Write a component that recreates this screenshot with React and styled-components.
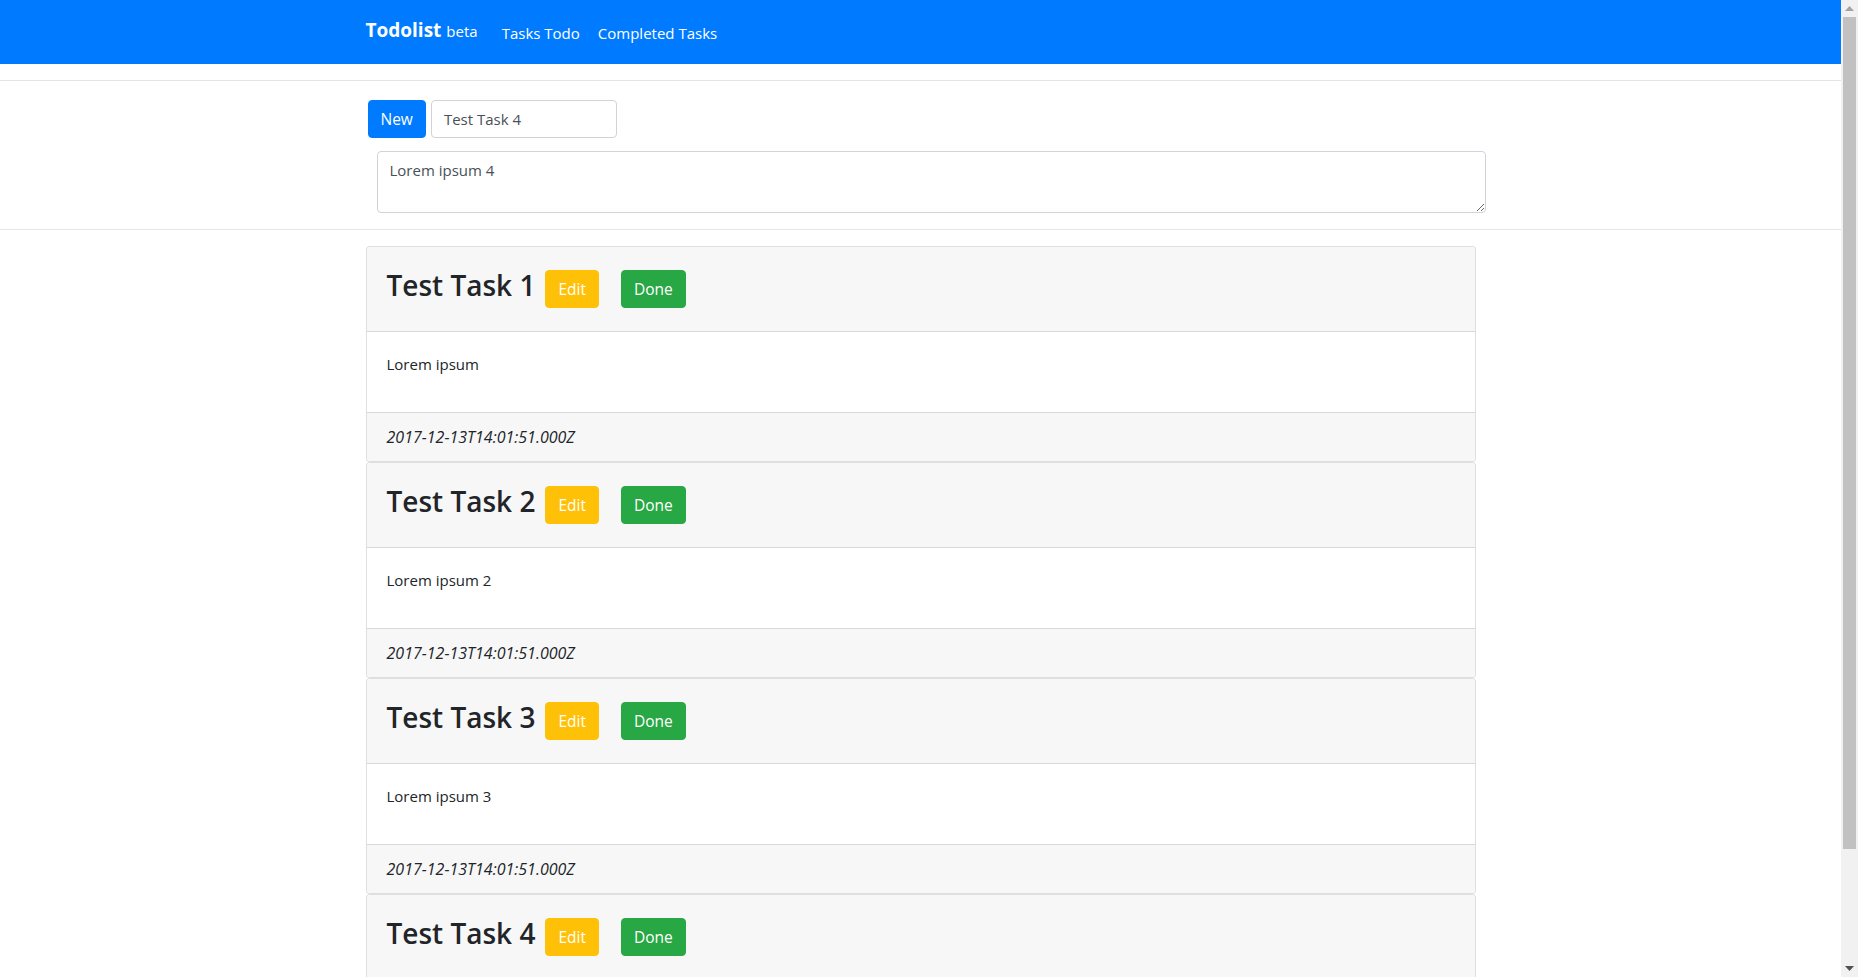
import React from "react";
import styled, { createGlobalStyle } from "styled-components";

const Global = createGlobalStyle`
  body {
    margin: 0;
    font-family: "Open Sans", "Noto Sans", "Liberation Sans", sans-serif;
    font-size: 16px;
    line-height: 1.5;
    color: #212529;
    background: #fff;
  }
  * { box-sizing: border-box; }
`;

const Frame = styled.div`
  display: flex;
  height: 100vh;
  overflow: hidden;
`;

const Page = styled.div`
  flex: 1;
  min-width: 0;
  overflow: hidden;
`;

const ScrollTrack = styled.div`
  width: 17px;
  flex: none;
  background: #f1f1f1;
  display: flex;
  flex-direction: column;
`;

const ScrollArrow = styled.div`
  height: 17px;
  flex: none;
  display: flex;
  align-items: center;
  justify-content: center;
`;

const ScrollThumb = styled.div`
  height: 832px;
  margin: 0 2px;
  background: #c1c1c1;
`;

const ScrollSpacer = styled.div`
  flex: 1;
`;

const Navbar = styled.nav`
  height: 64px;
  background: #007bff;
  display: flex;
  align-items: center;
`;

const Container = styled.div`
  width: 100%;
  max-width: 1140px;
  margin: 0 auto;
  padding: 0 15px;
`;

const NavInner = styled(Container)`
  display: flex;
  align-items: center;
`;

const Brand = styled.a`
  color: #fff;
  font-size: 19px;
  font-weight: 700;
  margin-right: 15px;
  margin-bottom: 3px;
  text-decoration: none;
  white-space: nowrap;
`;

const BrandSmall = styled.small`
  font-size: 15px;
  font-weight: 400;
  margin-left: 5px;
`;

const NavLink = styled.a`
  color: #fff;
  font-size: 15px;
  padding: 8px 9px 6px;
  text-decoration: none;
`;

const Divider = styled.hr`
  margin: ${(p) => p.$top}px 0 0 0;
  border: 0;
  border-top: 1px solid rgba(0, 0, 0, 0.1);
  height: 0;
`;

const FormSection = styled(Container)`
  padding-top: 19px;
`;

const FormRow = styled.div`
  display: flex;
  align-items: center;
  gap: 5px;
  padding-left: 2px;
`;

const Button = styled.button`
  font-family: inherit;
  font-size: 15.5px;
  line-height: 24px;
  height: 38px;
  padding: 6px 12px;
  border: 1px solid ${(p) => p.$bg};
  border-radius: 4px;
  background: ${(p) => p.$bg};
  color: #fff;
  cursor: pointer;
  margin-right: ${(p) => p.$mr || 0}px;
`;

const TextInput = styled.input`
  font-family: inherit;
  font-size: 15px;
  width: 186px;
  height: 38px;
  padding: 6px 12px;
  border: 1px solid #ced4da;
  border-radius: 4px;
  color: #495057;
  outline: none;
`;

const TextArea = styled.textarea`
  display: block;
  font-family: inherit;
  font-size: 15px;
  line-height: 24px;
  width: 1109px;
  height: 62px;
  margin: 13px 0 0 11px;
  padding: 6px 12px;
  border: 1px solid #ced4da;
  border-radius: 4px;
  color: #495057;
  outline: none;
`;

const List = styled(Container)`
  padding-top: 16px;
`;

const Card = styled.div`
  border: 1px solid rgba(0, 0, 0, 0.125);
  border-radius: 4px;
  background: #fff;
  overflow: hidden;
`;

const CardHeader = styled.div`
  display: flex;
  align-items: center;
  height: 85px;
  padding: 12px 20px;
  background: #f7f7f7;
  border-bottom: 1px solid rgba(0, 0, 0, 0.125);
`;

const Title = styled.h2`
  margin: 0 10px 0 0;
  font-size: 28px;
  font-weight: 600;
  line-height: 1.2;
  padding-bottom: 6px;
`;

const CardBody = styled.div`
  padding: 20px;
`;

const BodyText = styled.p`
  margin: 0 0 16px 0;
  font-size: 15px;
  line-height: 24px;
`;

const CardFooter = styled.div`
  padding: 12px 20px;
  background: #f7f7f7;
  border-top: 1px solid rgba(0, 0, 0, 0.125);
  font-style: italic;
  font-size: 16px;
  line-height: 24px;
`;

const tasks = [
  { title: "Test Task 1", body: "Lorem ipsum" },
  { title: "Test Task 2", body: "Lorem ipsum 2" },
  { title: "Test Task 3", body: "Lorem ipsum 3" },
  { title: "Test Task 4", body: "Lorem ipsum 4" },
];

export default function App() {
  return (
    <>
      <Global />
      <Frame>
        <Page>
          <Navbar>
            <NavInner>
              <Brand href="#">
                Todolist<BrandSmall>beta</BrandSmall>
              </Brand>
              <NavLink href="#">Tasks Todo</NavLink>
              <NavLink href="#">Completed Tasks</NavLink>
            </NavInner>
          </Navbar>
          <Divider $top={16} />
          <FormSection>
            <FormRow>
              <Button $bg="#007bff">New</Button>
              <TextInput defaultValue="Test Task 4" />
            </FormRow>
            <TextArea defaultValue="Lorem ipsum 4" />
          </FormSection>
          <Divider $top={16} />
          <List>
            {tasks.map((t) => (
              <Card key={t.title}>
                <CardHeader>
                  <Title>{t.title}</Title>
                  <Button $bg="#ffc107" $mr={22}>Edit</Button>
                  <Button $bg="#28a745">Done</Button>
                </CardHeader>
                <CardBody>
                  <BodyText>{t.body}</BodyText>
                </CardBody>
                <CardFooter>2017-12-13T14:01:51.000Z</CardFooter>
              </Card>
            ))}
          </List>
        </Page>
        <ScrollTrack>
          <ScrollArrow>
            <svg width="9" height="5" viewBox="0 0 9 5">
              <polygon points="0,5 9,5 4.5,0" fill="#a3a3a3" />
            </svg>
          </ScrollArrow>
          <ScrollThumb />
          <ScrollSpacer />
          <ScrollArrow>
            <svg width="9" height="5" viewBox="0 0 9 5">
              <polygon points="0,0 9,0 4.5,5" fill="#505050" />
            </svg>
          </ScrollArrow>
        </ScrollTrack>
      </Frame>
    </>
  );
}
